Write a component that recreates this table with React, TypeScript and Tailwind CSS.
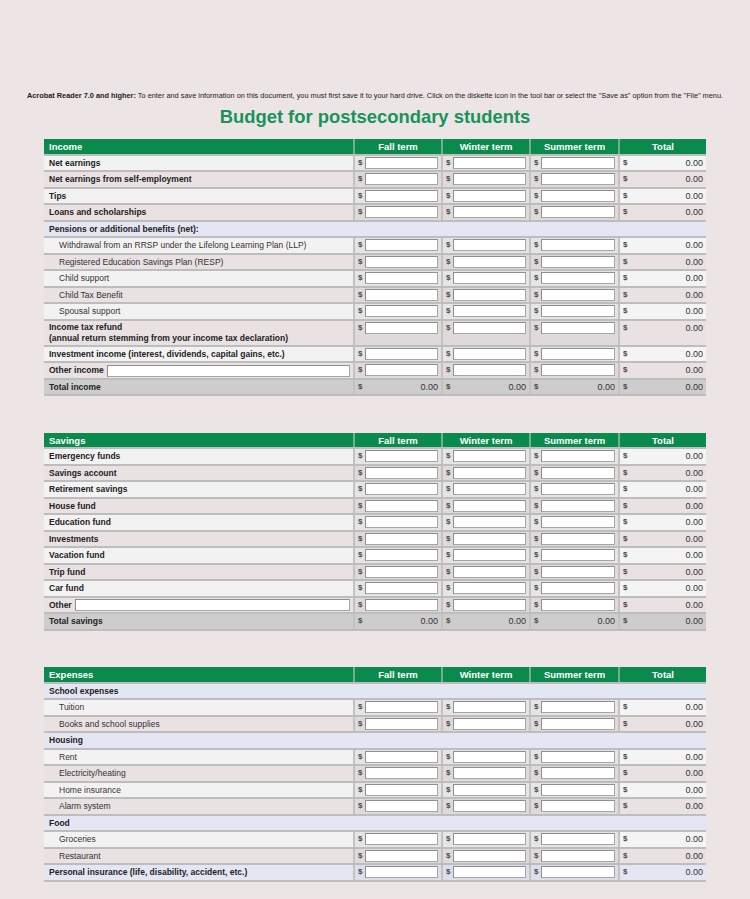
import React from "react";

type Bg = "light" | "pink" | "lav" | "gray";

type Row = {
  label: string;
  bg: Bg;
  kind?: "item" | "section" | "total" | "other";
  indent?: boolean;
  tall?: string;
};

const rowBg: Record<Bg, string> = {
  light: "bg-[#f3f2f2]",
  pink: "bg-[#e9e1e2]",
  lav: "bg-[#e4e7f3]",
  gray: "bg-[#cdcdcd]",
};

const cellBg: Record<Bg, string> = {
  light: "bg-[#e6e5e5]",
  pink: "bg-[#e0d9da]",
  lav: "bg-[#dcdfeb]",
  gray: "bg-[#cdcdcd]",
};

const totalBg: Record<Bg, string> = {
  light: "bg-[#f4f4f4]",
  pink: "bg-[#e9e1e2]",
  lav: "bg-[#e4e7f3]",
  gray: "bg-[#cdcdcd]",
};

const termWidths = ["w-[88px]", "w-[88px]", "w-[89px]"];

const income: Row[] = [
  { label: "Net earnings", bg: "light" },
  { label: "Net earnings from self-employment", bg: "pink" },
  { label: "Tips", bg: "light" },
  { label: "Loans and scholarships", bg: "pink" },
  { label: "Pensions or additional benefits (net):", bg: "lav", kind: "section" },
  { label: "Withdrawal from an RRSP under the Lifelong Learning Plan (LLP)", bg: "light", indent: true },
  { label: "Registered Education Savings Plan (RESP)", bg: "pink", indent: true },
  { label: "Child support", bg: "light", indent: true },
  { label: "Child Tax Benefit", bg: "pink", indent: true },
  { label: "Spousal support", bg: "light", indent: true },
  {
    label: "Income tax refund",
    tall: "(annual return stemming from your income tax declaration)",
    bg: "pink",
  },
  { label: "Investment income (interest, dividends, capital gains, etc.)", bg: "light" },
  { label: "Other income", bg: "pink", kind: "other" },
  { label: "Total income", bg: "gray", kind: "total" },
];

const savings: Row[] = [
  { label: "Emergency funds", bg: "light" },
  { label: "Savings account", bg: "pink" },
  { label: "Retirement savings", bg: "light" },
  { label: "House fund", bg: "pink" },
  { label: "Education fund", bg: "light" },
  { label: "Investments", bg: "pink" },
  { label: "Vacation fund", bg: "light" },
  { label: "Trip fund", bg: "pink" },
  { label: "Car fund", bg: "light" },
  { label: "Other", bg: "pink", kind: "other" },
  { label: "Total savings", bg: "gray", kind: "total" },
];

const expenses: Row[] = [
  { label: "School expenses", bg: "lav", kind: "section" },
  { label: "Tuition", bg: "light", indent: true },
  { label: "Books and school supplies", bg: "pink", indent: true },
  { label: "Housing", bg: "lav", kind: "section" },
  { label: "Rent", bg: "light", indent: true },
  { label: "Electricity/heating", bg: "pink", indent: true },
  { label: "Home insurance", bg: "light", indent: true },
  { label: "Alarm system", bg: "pink", indent: true },
  { label: "Food", bg: "lav", kind: "section" },
  { label: "Groceries", bg: "light", indent: true },
  { label: "Restaurant", bg: "pink", indent: true },
  { label: "Personal insurance (life, disability, accident, etc.)", bg: "lav" },
];

const Dollar = () => (
  <span className="w-[10px] shrink-0 pl-[3px] text-[8px] font-bold leading-[12px] text-[#4a4a4a]">$</span>
);

const TermCell = ({ bg, w, total }: { bg: Bg; w: string; total: boolean }) => (
  <div className={`${w} flex items-start border-l-2 border-[#c2c2c2] pt-[1px] ${total ? totalBg.gray : cellBg[bg]}`}>
    <Dollar />
    {total ? (
      <span className="flex-1 pr-[3px] text-right text-[9px] leading-[12px] text-[#333]">0.00</span>
    ) : (
      <div className="mr-[3px] h-[12px] flex-1 border border-[#a6a6a6] border-l-[#8e8e8e] border-t-[#8e8e8e] bg-white" />
    )}
  </div>
);

const TableRow = ({ row }: { row: Row }) => {
  const kind = row.kind ?? "item";
  const h = row.tall ? "h-[26px]" : "h-[16.5px]";
  if (kind === "section") {
    return (
      <div className={`flex ${h} items-center border-b-2 border-[#bdbdbd] pl-[5px] pt-px ${rowBg[row.bg]}`}>
        <span className="text-[8.5px] font-bold text-[#222]">{row.label}</span>
      </div>
    );
  }
  return (
    <div className={`flex ${h} border-b-2 border-[#bdbdbd] ${rowBg[row.bg]}`}>
      <div
        className={`flex w-[309px] pt-px ${row.tall ? "flex-col justify-center" : "items-center"} ${
          row.indent ? "pl-[15px]" : "pl-[5px]"
        }`}
      >
        <span className={`text-[8.5px] leading-[11px] ${row.indent ? "text-[#333]" : "font-bold text-[#222]"}`}>
          {row.label}
        </span>
        {row.tall && <span className="text-[8.5px] font-bold leading-[11px] text-[#222]">{row.tall}</span>}
        {kind === "other" && (
          <div className="ml-[3px] mr-[3px] h-[12px] flex-1 border border-[#a6a6a6] border-l-[#8e8e8e] border-t-[#8e8e8e] bg-white" />
        )}
      </div>
      {termWidths.map((w, i) => (
        <TermCell key={i} bg={row.bg} w={w} total={kind === "total"} />
      ))}
      <div className={`flex w-[88px] items-start border-l-2 border-[#c2c2c2] pt-[1px] ${totalBg[row.bg]}`}>
        <Dollar />
        <span className="flex-1 pr-[3px] text-right text-[9px] leading-[12px] text-[#333]">0.00</span>
      </div>
    </div>
  );
};

const Table = ({ title, rows }: { title: string; rows: Row[] }) => (
  <div className="mx-auto w-[662px]">
    <div className="flex h-[16.5px] border-b-2 border-[#bdbdbd] bg-[#0b8a4e] text-[9.5px] font-bold leading-[15px] text-white">
      <div className="w-[309px] pl-[5px]">{title}</div>
      <div className="w-[88px] border-l-2 border-[#6fb08e] text-center">Fall term</div>
      <div className="w-[88px] border-l-2 border-[#6fb08e] text-center">Winter term</div>
      <div className="w-[89px] border-l-2 border-[#6fb08e] text-center">Summer term</div>
      <div className="w-[88px] border-l-2 border-[#6fb08e] text-center">Total</div>
    </div>
    {rows.map((r) => (
      <TableRow key={r.label} row={r} />
    ))}
  </div>
);

export default function App() {
  return (
    <div className="min-h-[899px] bg-[#ece4e5] pt-[91px] font-['Liberation_Sans',Arial,sans-serif]">
      <p className="whitespace-nowrap text-center text-[7.35px] leading-[9px] text-[#222]">
        <span className="font-bold">Acrobat Reader 7.0 and higher:</span>
        {"  "}To enter and save information on this document, you must first save it to your hard drive. Click on the
        diskette icon in the tool bar or select the "Save as" option from the "File" menu.
      </p>
      <h1 className="mt-[5px] mb-[10px] text-center text-[18.4px] font-bold leading-[24px] text-[#16945a]">
        Budget for postsecondary students
      </h1>
      <Table title="Income" rows={income} />
      <div className="h-[36.5px]" />
      <Table title="Savings" rows={savings} />
      <div className="h-[36.5px]" />
      <Table title="Expenses" rows={expenses} />
    </div>
  );
}
